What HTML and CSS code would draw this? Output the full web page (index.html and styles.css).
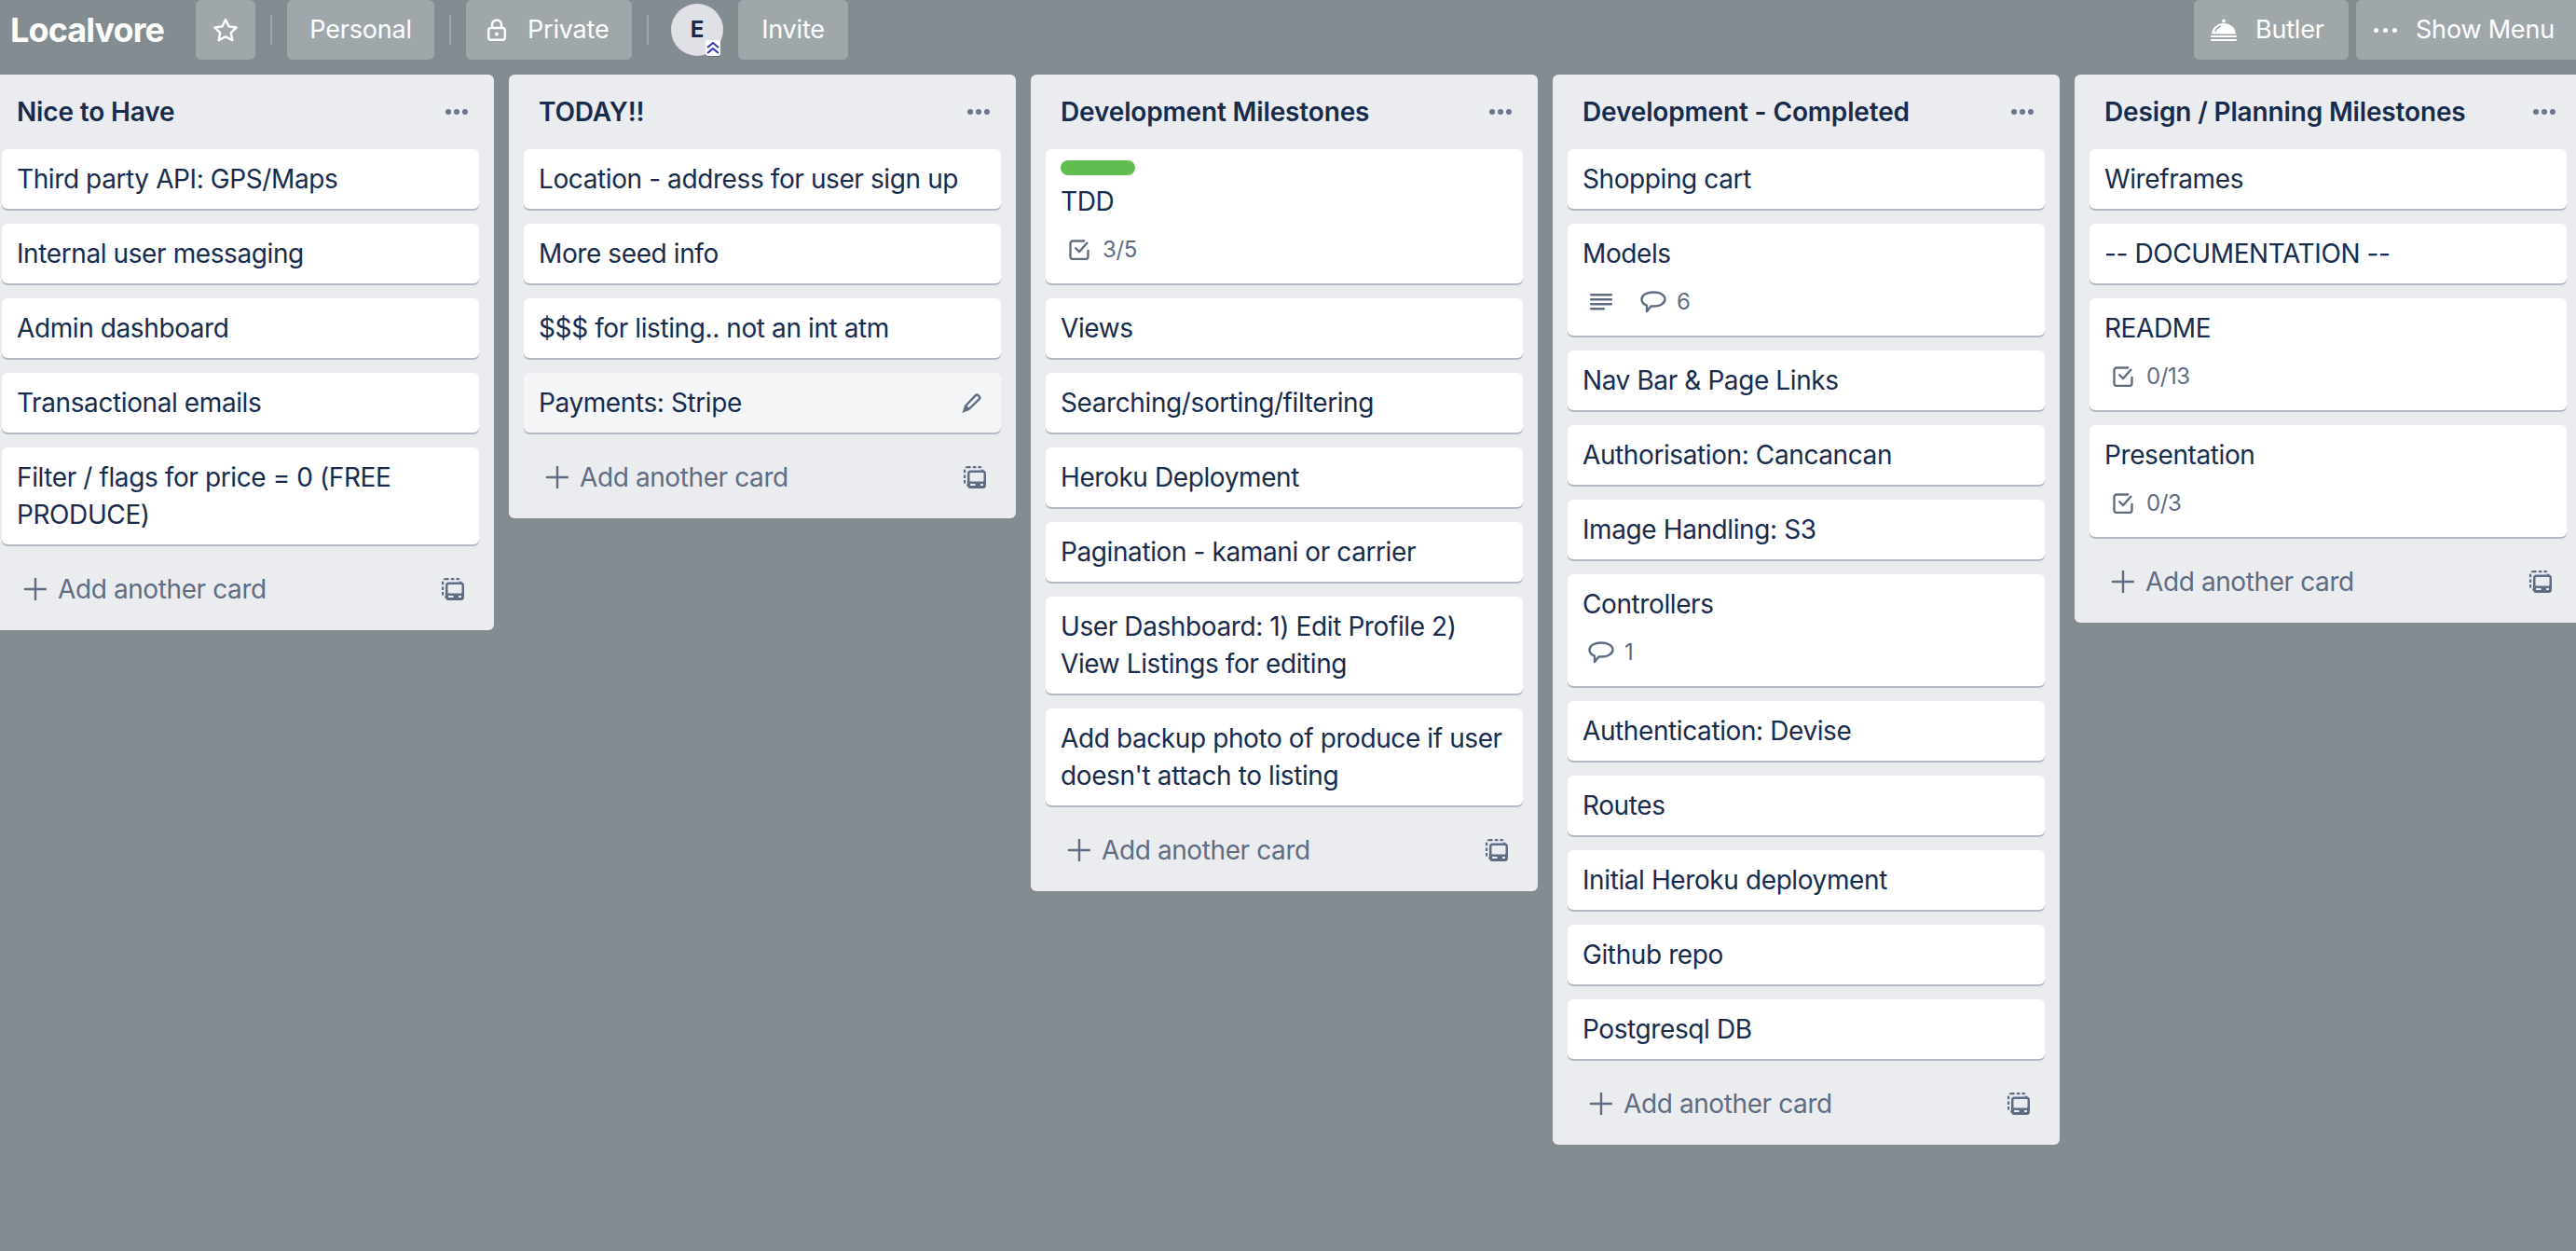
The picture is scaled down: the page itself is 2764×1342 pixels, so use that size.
FILE: index.html
```html
<!DOCTYPE html>
<html lang="en">
<head>
    <meta charset="UTF-8">
    <title>Localvore | Trello</title>
    <link rel="stylesheet" href="styles.css">
</head>
<body>
    <svg class="icon-defs" width="0" height="0">
        <symbol id="i-star" viewBox="0 0 28 26"><path d="M14 2l3.6 7.4 8.1 1.1-5.9 5.6 1.5 8L14 20.3l-7.3 3.8 1.5-8-5.9-5.6 8.1-1.1z" fill="none" stroke="currentColor" stroke-width="2.4" stroke-linejoin="round"/></symbol>
        <symbol id="i-lock" viewBox="0 0 20 24"><path d="M5 10V6.5a5 5 0 0 1 10 0V10" fill="none" stroke="currentColor" stroke-width="2.4"/><rect x="1.2" y="10" width="17.6" height="12.8" rx="2.5" fill="none" stroke="currentColor" stroke-width="2.4"/><circle cx="10" cy="16.4" r="2" fill="currentColor"/></symbol>
        <symbol id="i-bell" viewBox="0 0 28 24"><circle cx="14" cy="2.5" r="2" fill="currentColor"/><path d="M1 16.5C1.5 9.5 7 5 14 5s12.5 4.500 13 11.500z" fill="currentColor"/><path d="M5 14c.8-3 3-5 6-6" fill="none" stroke="#9fa6a9" stroke-width="1.500"/><rect y="18" width="28" height="2" rx="1" fill="currentColor"/><rect y="22" width="28" height="2" rx="1" fill="currentColor"/></symbol>
        <symbol id="i-check" viewBox="0 0 22 22"><path d="M20.500 11v7.500a2.500 2.500 0 0 1-2.500 2.500H4a2.500 2.500 0 0 1-2.500-2.500V4A2.500 2.500 0 0 1 4 1.500h13" fill="none" stroke="currentColor" stroke-width="2.400"/><path d="M6.500 8.500l4.500 4.500 9-10" fill="none" stroke="currentColor" stroke-width="2.400"/></symbol>
        <symbol id="i-lines" viewBox="0 0 24 18"><rect width="24" height="2.400" rx="1" fill="currentColor"/><rect y="5" width="24" height="2.400" rx="1" fill="currentColor"/><rect y="10" width="24" height="2.400" rx="1" fill="currentColor"/><rect y="15" width="16" height="2.400" rx="1" fill="currentColor"/></symbol>
        <symbol id="i-comment" viewBox="0 0 28 24"><path d="M14 1.500c6.800 0 12.500 2.900 12.500 7.500s-5.700 7.500-12.500 7.500h-2.500l-4.500 5.500v-6.300C3.500 14.500 1.500 12 1.500 9c0-4.600 5.700-7.500 12.500-7.500z" fill="none" stroke="currentColor" stroke-width="2.400" stroke-linejoin="round"/></symbol>
        <symbol id="i-plus" viewBox="0 0 24 24"><path d="M12 0v24M0 12h24" fill="none" stroke="currentColor" stroke-width="2.400"/></symbol>
        <symbol id="i-template" viewBox="0 0 24 24"><rect x="1.100" y="1.100" width="19" height="19" rx="3" fill="none" stroke="currentColor" stroke-width="2.200" stroke-dasharray="3.500 2.200"/><rect x="4" y="4.500" width="20" height="19.500" rx="3.500" fill="currentColor"/><rect x="6.500" y="7" width="15" height="9.500" rx="1" fill="#ebecf0"/><rect x="7" y="19" width="5.500" height="2" fill="#ebecf0"/><rect x="18" y="19" width="3" height="2" fill="#ebecf0"/></symbol>
        <symbol id="i-pencil" viewBox="0 0 24 24"><path d="M6 14.500L16.800 3.200a2 2 0 0 1 2.800 0l1.100 1.100a2 2 0 0 1 0 2.800L9.500 18z" fill="none" stroke="currentColor" stroke-width="2.400" stroke-linejoin="round"/><path d="M5 14l5 5-7.500 3z" fill="currentColor"/></symbol>
    </svg>

    <header class="topbar">
        <h1 class="board-name">Localvore</h1>
        <a class="btn btn-star"><svg class="ic-star"><use href="#i-star"/></svg></a>
        <span class="sep"></span>
        <a class="btn btn-personal">Personal</a>
        <span class="sep"></span>
        <a class="btn btn-private"><svg class="ic-lock"><use href="#i-lock"/></svg>Private</a>
        <span class="sep"></span>
        <div class="avatar">E
            <span class="avatar-badge">
                <svg viewBox="0 0 16 17"><path d="M2 8l6-5 6 5M2 14l6-5 6 5" fill="none" stroke="#3535b5" stroke-width="2"/></svg>
            </span>
        </div>
        <a class="btn btn-invite">Invite</a>
        <div class="topbar-right">
            <a class="btn btn-butler"><svg class="ic-bell"><use href="#i-bell"/></svg>Butler</a>
            <a class="btn btn-menu"><span class="menu-dots"><i></i><i></i><i></i></span>Show Menu</a>
        </div>
    </header>

    <main class="board">
        <section class="list">
            <div class="list-head"><h2>Nice to Have</h2><span class="dots"><i></i><i></i><i></i></span></div>
            <div class="card">Third party API: GPS/Maps</div>
            <div class="card">Internal user messaging</div>
            <div class="card">Admin dashboard</div>
            <div class="card">Transactional emails</div>
            <div class="card">Filter / flags for price = 0 (FREE PRODUCE)</div>
            <div class="list-foot"><svg class="ic-plus"><use href="#i-plus"/></svg><span>Add another card</span><svg class="ic-template"><use href="#i-template"/></svg></div>
        </section>

        <section class="list">
            <div class="list-head"><h2>TODAY!!</h2><span class="dots"><i></i><i></i><i></i></span></div>
            <div class="card">Location - address for user sign up</div>
            <div class="card">More seed info</div>
            <div class="card">$$$ for listing.. not an int atm</div>
            <div class="card card-hover">Payments: Stripe<svg class="ic-pencil"><use href="#i-pencil"/></svg></div>
            <div class="list-foot"><svg class="ic-plus"><use href="#i-plus"/></svg><span>Add another card</span><svg class="ic-template"><use href="#i-template"/></svg></div>
        </section>

        <section class="list">
            <div class="list-head"><h2>Development Milestones</h2><span class="dots"><i></i><i></i><i></i></span></div>
            <div class="card">
                <div class="label"></div>
                TDD
                <div class="badges"><span class="badge"><svg class="ic-check"><use href="#i-check"/></svg>3/5</span></div>
            </div>
            <div class="card">Views</div>
            <div class="card">Searching/sorting/filtering</div>
            <div class="card">Heroku Deployment</div>
            <div class="card">Pagination - kamani or carrier</div>
            <div class="card">User Dashboard: 1) Edit Profile 2) View Listings for editing</div>
            <div class="card">Add backup photo of produce if user doesn't attach to listing</div>
            <div class="list-foot"><svg class="ic-plus"><use href="#i-plus"/></svg><span>Add another card</span><svg class="ic-template"><use href="#i-template"/></svg></div>
        </section>

        <section class="list">
            <div class="list-head"><h2>Development - Completed</h2><span class="dots"><i></i><i></i><i></i></span></div>
            <div class="card">Shopping cart</div>
            <div class="card">
                Models
                <div class="badges">
                    <span class="badge"><svg class="ic-lines"><use href="#i-lines"/></svg></span>
                    <span class="badge"><svg class="ic-comment"><use href="#i-comment"/></svg>6</span>
                </div>
            </div>
            <div class="card">Nav Bar &amp; Page Links</div>
            <div class="card">Authorisation: Cancancan</div>
            <div class="card">Image Handling: S3</div>
            <div class="card">
                Controllers
                <div class="badges"><span class="badge"><svg class="ic-comment"><use href="#i-comment"/></svg>1</span></div>
            </div>
            <div class="card">Authentication: Devise</div>
            <div class="card">Routes</div>
            <div class="card">Initial Heroku deployment</div>
            <div class="card">Github repo</div>
            <div class="card">Postgresql DB</div>
            <div class="list-foot"><svg class="ic-plus"><use href="#i-plus"/></svg><span>Add another card</span><svg class="ic-template"><use href="#i-template"/></svg></div>
        </section>

        <section class="list">
            <div class="list-head"><h2>Design / Planning Milestones</h2><span class="dots"><i></i><i></i><i></i></span></div>
            <div class="card">Wireframes</div>
            <div class="card">-- DOCUMENTATION --</div>
            <div class="card">
                README
                <div class="badges"><span class="badge"><svg class="ic-check"><use href="#i-check"/></svg>0/13</span></div>
            </div>
            <div class="card">
                Presentation
                <div class="badges"><span class="badge"><svg class="ic-check"><use href="#i-check"/></svg>0/3</span></div>
            </div>
            <div class="list-foot"><svg class="ic-plus"><use href="#i-plus"/></svg><span>Add another card</span><svg class="ic-template"><use href="#i-template"/></svg></div>
        </section>
    </main>
</body>
</html>
```

FILE: styles.css
```css
html, body {
    height: 100%;
}
body {
    margin: 0;
    overflow: hidden;
    background-color: #838c91;
    color: #172b4d;
    font-family: Inter, "Noto Sans", sans-serif;
    font-size: 28px;
    letter-spacing: -0.4px;
    line-height: 40px;
}
.icon-defs {
    position: absolute;
}
svg {
    display: block;
    flex: none;
}

/* top bar */
.topbar {
    display: flex;
    align-items: flex-start;
    height: 64px;
    padding: 0 0 16px 11px;
    color: white;
    font-size: 27px;
    letter-spacing: -0.2px;
}
.board-name {
    width: 166px;
    margin: 0 33px 0 0;
    font-size: 36px;
    font-weight: 700;
    letter-spacing: -0.9px;
    line-height: 64px;
    white-space: nowrap;
}
.btn {
    display: flex;
    align-items: center;
    height: 64px;
    border-radius: 6px;
    background-color: rgba(255, 255, 255, 0.24);
    box-sizing: border-box;
}
.btn-star {
    width: 64px;
    padding: 0 18px;
}
.btn-personal {
    width: 158px;
    justify-content: center;
}
.btn-private {
    width: 178px;
    padding-left: 23px;
}
.btn-invite {
    width: 118px;
    margin-left: 16px;
    justify-content: center;
}
.sep {
    width: 2px;
    height: 32px;
    margin: 16px 16px 0;
    background-color: rgba(255, 255, 255, 0.24);
}
.ic-star {
    width: 28px;
    height: 26px;
}
.ic-lock {
    width: 20px;
    height: 24px;
    margin-right: 23px;
}
.ic-bell {
    width: 28px;
    height: 24px;
    margin-right: 20px;
}
.avatar {
    position: relative;
    width: 56px;
    height: 56px;
    margin: 4px 0 0 8px;
    border-radius: 50%;
    background-color: #dfe1e6;
    color: #172b4d;
    font-size: 24px;
    font-weight: 700;
    line-height: 56px;
    text-align: center;
}
.avatar-badge {
    position: absolute;
    right: 3px;
    bottom: 0;
    width: 16px;
    height: 17px;
    background-color: white;
    border-radius: 3px;
    box-shadow: 0 1px 0 #5e6c84;
}
.topbar-right {
    display: flex;
    gap: 8px;
    margin-left: auto;
}
.btn-butler {
    width: 166px;
    padding-left: 18px;
}
.btn-menu {
    width: 236px;
    padding-left: 19px;
    border-radius: 6px 0 0 6px;
}
.menu-dots {
    display: flex;
    gap: 5px;
    margin-right: 20px;
}
.menu-dots i {
    width: 5px;
    height: 5px;
    border-radius: 50%;
    background-color: white;
}

/* board */
.board {
    display: flex;
    align-items: flex-start;
    gap: 16px;
    margin-left: -14px;
}
.list {
    flex: none;
    width: 544px;
    padding: 0 16px;
    border-radius: 6px;
    background-color: #ebecf0;
    box-sizing: border-box;
}
.list-head {
    display: flex;
    align-items: center;
    justify-content: space-between;
    height: 80px;
    padding: 0 12px 0 16px;
}
.list-head h2 {
    margin: 0;
    font-size: 28px;
    font-weight: 600;
    letter-spacing: -0.15px;
}
.dots {
    display: flex;
    gap: 3px;
}
.dots i {
    width: 6px;
    height: 6px;
    border-radius: 50%;
    background-color: #6b778c;
}
.card {
    position: relative;
    margin-bottom: 16px;
    padding: 12px 16px;
    border-radius: 6px;
    background-color: white;
    box-shadow: 0 2px 0 #b3bac5;
}
.card-hover {
    background-color: #f4f5f7;
}
.ic-pencil {
    position: absolute;
    top: 21px;
    right: 20px;
    width: 24px;
    height: 24px;
    color: #5e6c84;
}
.label {
    width: 80px;
    height: 16px;
    margin-bottom: 8px;
    border-radius: 8px;
    background-color: #61bd4f;
}
.badges {
    display: flex;
    gap: 24px;
    height: 40px;
    margin: 12px 0 4px 4px;
    color: #5e6c84;
    font-size: 24px;
}
.badge {
    display: flex;
    align-items: center;
    gap: 9px;
}
.badge > svg {
    box-sizing: content-box;
}
.ic-check {
    width: 22px;
    height: 22px;
    padding: 0 5px;
}
.ic-lines {
    width: 24px;
    height: 18px;
    padding: 0 4px;
}
.ic-comment {
    width: 28px;
    height: 24px;
    padding: 0 2px;
}
.list-foot {
    display: flex;
    align-items: center;
    height: 64px;
    padding: 0 16px 12px 24px;
    color: #5e6c84;
}
.list-foot span {
    flex: 1;
    margin-left: 12px;
}
.ic-plus, .ic-template {
    width: 24px;
    height: 24px;
}
```
